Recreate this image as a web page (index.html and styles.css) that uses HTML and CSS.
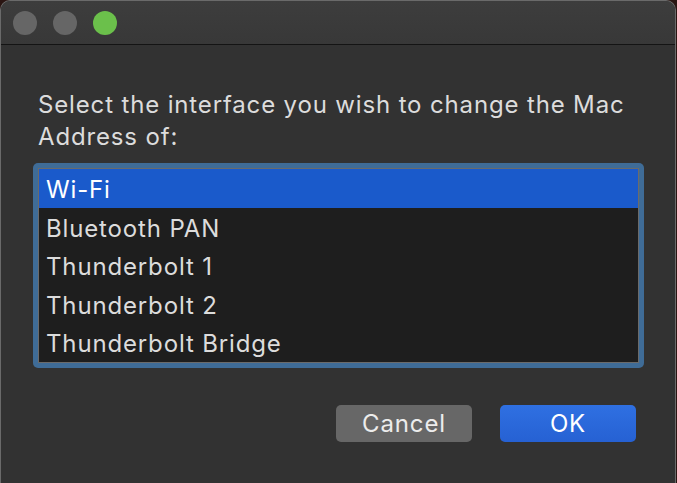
FILE: index.html
```html
<!DOCTYPE html>
<html lang="en">
<head>
  <meta charset="UTF-8">
  <title>Change Mac Address</title>
  <link rel="stylesheet" href="styles.css">
</head>
<body>
  <div id="window">
    <div class="titlebar">
      <span class="light gray"></span>
      <span class="light gray"></span>
      <span class="light green"></span>
    </div>

    <div class="content">
      <p class="prompt">Select the interface you wish to change the Mac Address of:</p>

      <div class="list-ring">
        <ul class="list">
          <li class="selected">Wi-Fi</li>
          <li>Bluetooth PAN</li>
          <li>Thunderbolt 1</li>
          <li>Thunderbolt 2</li>
          <li>Thunderbolt Bridge</li>
        </ul>
      </div>

      <div class="buttons">
        <span class="btn cancel">Cancel</span>
        <span class="btn ok">OK</span>
      </div>
    </div>
  </div>
</body>
</html>
```

FILE: styles.css
```css
*{
  margin: 0;
  padding: 0;
  box-sizing: border-box;
}
li{
  list-style: none;
}

body{
  width: 677px;
  height: 483px;
  overflow: hidden;
  background: #2a1512;
  font-family: Inter, "Liberation Sans", sans-serif;
  letter-spacing: 0.85px;
  color: #dedede;
}

#window{
  width: 676px;
  height: 500px;
  border: 1px solid #6a6a6a;
  border-bottom: none;
  border-radius: 10px 10px 0 0;
  background: #323232;
  overflow: hidden;
}

.titlebar{
  display: flex;
  align-items: center;
  gap: 16px;
  height: 44px;
  padding-left: 12px;
  background: linear-gradient(#3d3d3d, #383838);
  border-bottom: 1px solid #141414;
}

.light{
  width: 24px;
  height: 24px;
  border-radius: 50%;
}
.light.gray{
  background: #666666;
}
.light.green{
  background: #6bc04b;
}

.content{
  padding: 44px 0 0 37px;
}

.prompt{
  width: 620px;
  font-size: 24px;
  line-height: 32px;
  color: #dcdcdc;
}

.list-ring{
  width: 611px;
  margin: 10px 0 0 -5px;
  padding: 5px;
  border-radius: 5px;
  background: #3f6c97;
}

.list{
  background: #1e1e1e;
  border: 1px solid #6b6b6b;
}

.list>li{
  height: 38.5px;
  padding: 3px 0 0 7px;
  line-height: 35.5px;
  font-size: 24px;
  color: #dcdcdc;
}
.list>.selected{
  background: #1a5acb;
  color: #ffffff;
}

.buttons{
  display: flex;
  justify-content: flex-end;
  gap: 28px;
  width: 598px;
  margin-top: 37px;
}

.btn{
  display: block;
  width: 136px;
  height: 37px;
  line-height: 37px;
  text-align: center;
  font-size: 24px;
  border-radius: 5px;
  color: #ececec;
}
.btn.cancel{
  background: #676767;
}
.btn.ok{
  background: linear-gradient(#2f70e2, #2661d3);
  color: #ffffff;
}
```
